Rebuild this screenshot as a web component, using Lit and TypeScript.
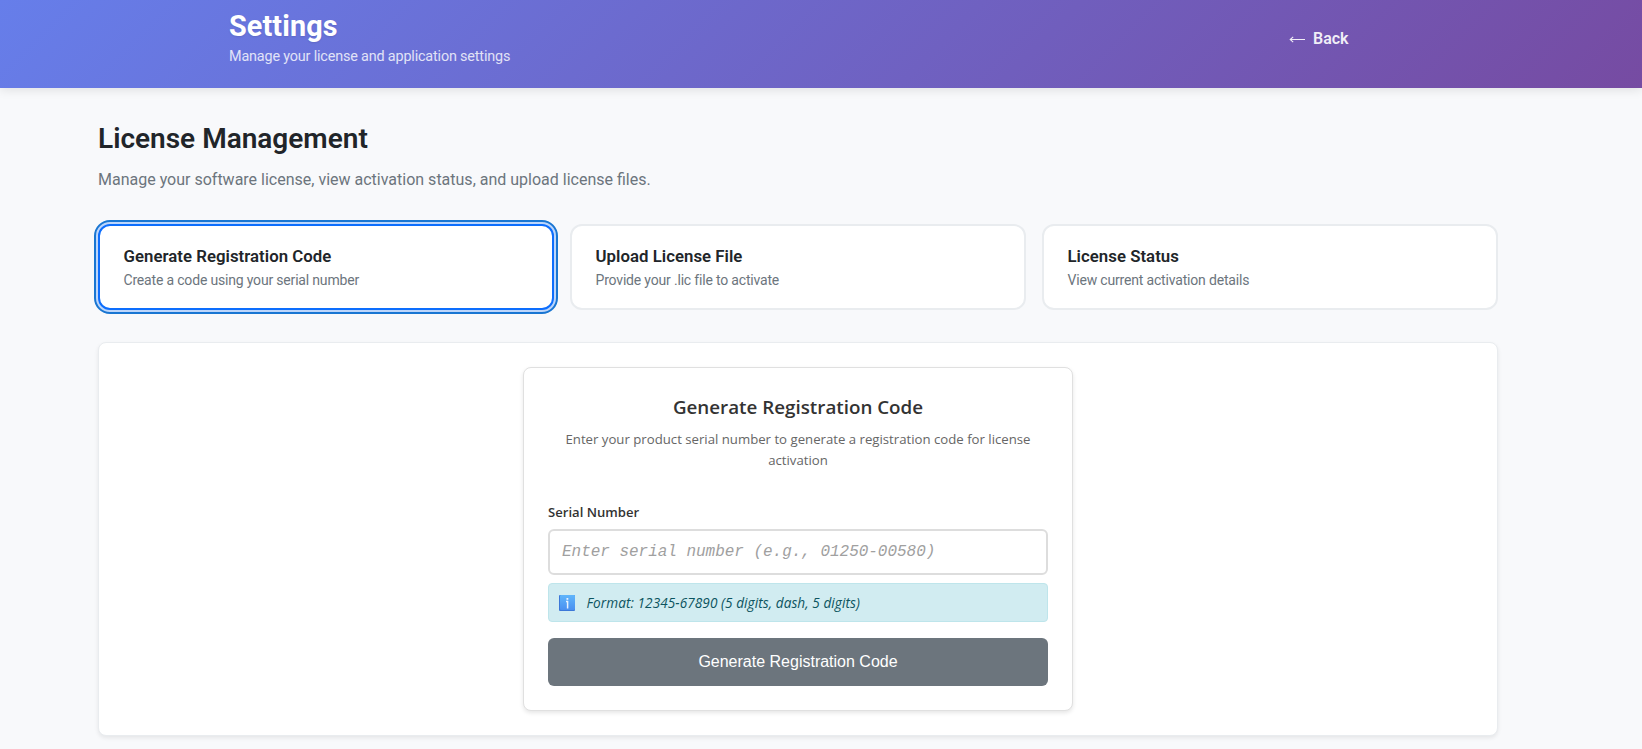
import { LitElement, html, css } from "lit";
import { customElement, property, state } from "lit/decorators.js";
import { classMap } from "lit/directives/class-map.js";

@customElement("settings-header")
class SettingsHeader extends LitElement {
  static styles = css`
    :host { display: block; }
    .bar {
      height: 88px; box-sizing: border-box; padding: 9px 0 0 229px;
      display: flex; color: #fff;
      background: linear-gradient(135deg, #667eea 0%, #764ba2 100%);
      box-shadow: 0 2px 10px rgba(0, 0, 0, 0.1);
    }
    .titles { width: 1060px; }
    h1 { margin: 0; font-size: 28.8px; line-height: 35px; font-weight: 700; letter-spacing: 0.1px; text-shadow: 0 1px 2px rgba(0, 0, 0, 0.1); }
    p { margin: 2px 0 0; font-size: 14.4px; line-height: 21px; letter-spacing: -0.17px; opacity: 0.8; }
    .back { display: flex; align-items: center; gap: 8px; height: 24px; margin-top: 17px; font-size: 16px; font-weight: 600; opacity: 0.9; }
    .arrow { display: block; width: 16px; height: 7px; margin-top: 2px; }
  `;
  render() {
    return html`<header class="bar">
      <div class="titles">
        <h1>Settings</h1>
        <p>Manage your license and application settings</p>
      </div>
      <a class="back">
        <svg class="arrow" viewBox="0 0 16 7" fill="none" stroke="#fff" stroke-width="1.1"><path d="M1 3.5H16M4.2 0.8L1.2 3.5L4.2 6.2" /></svg>
        <span>Back</span>
      </a>
    </header>`;
  }
}

@customElement("option-card")
class OptionCard extends LitElement {
  @property() heading = "";
  @property() detail = "";
  @property({ type: Boolean }) active = false;
  static styles = css`
    :host { display: block; }
    .card {
      display: block; width: 100%; height: 86px; box-sizing: border-box; text-align: left;
      padding: 18px 23.5px; background: #fff; border: 2px solid #e9ecef; border-radius: 12px;
      font-family: Roboto, sans-serif;
    }
    .active { border-color: #0d6efd; box-shadow: 0 0 0 3px rgba(13, 110, 253, 0.25); outline: 2px solid #1976d2; outline-offset: 2px; }
    .heading { display: block; font-size: 16.8px; line-height: 24px; font-weight: 600; letter-spacing: 0.03px; color: #212529; }
    .detail { display: block; margin-top: 2px; font-size: 14px; line-height: 21px; letter-spacing: -0.18px; color: #6c757d; }
  `;
  render() {
    return html`<button class=${classMap({ card: true, active: this.active })}>
      <span class="heading">${this.heading}</span>
      <span class="detail">${this.detail}</span>
    </button>`;
  }
}

@customElement("registration-form")
class RegistrationForm extends LitElement {
  static styles = css`
    :host { display: block; width: 550px; }
    .form {
      height: 344px; box-sizing: border-box; padding: 24px; background: #fff;
      border: 1px solid #e0e0e0; border-radius: 8px; box-shadow: 0 2px 4px rgba(0, 0, 0, 0.1);
      font-family: "Open Sans", "Noto Sans", sans-serif;
    }
    h3 { margin: 0; text-align: center; font-size: 18.8px; line-height: 30px; font-weight: 600; color: #333; }
    p { margin: 7px 0 0; text-align: center; font-size: 13.2px; line-height: 21px; color: #666; }
    label { display: block; margin-top: 31px; font-size: 13.1px; line-height: 20px; font-weight: 600; color: #333; }
    input {
      display: block; width: 100%; height: 46px; box-sizing: border-box; margin-top: 7px; padding: 0 12px;
      border: 2px solid #ddd; border-radius: 6px; background: #fff;
      font: 16px "Liberation Mono", monospace; letter-spacing: -0.03px;
    }
    input::placeholder { color: #a0a0a0; font-style: italic; opacity: 1; }
    .hint {
      display: flex; align-items: center; gap: 11.5px; height: 39px; box-sizing: border-box; margin-top: 8px; padding: 0 10px;
      background: #d1ecf1; border: 1px solid #bee5eb; border-radius: 4px;
      color: #0c5460; font-size: 13.6px; font-style: italic; letter-spacing: 0.07px;
    }
    .info { display: block; width: 16px; height: 16px; margin-top: 1px; }
    .submit {
      display: block; width: 100%; height: 48px; margin-top: 16px; border: 0; border-radius: 6px;
      background: #6c757d; color: #fff; font: 16px "Liberation Sans", Arial, sans-serif;
    }
  `;
  render() {
    return html`<section class="form">
      <h3><span>Generate Registration Code</span></h3>
      <p>Enter your product serial number to generate a registration code for license<br />activation</p>
      <label for="serial"><span>Serial Number</span></label>
      <input id="serial" placeholder="Enter serial number (e.g., 01250-00580)" />
      <div class="hint">
        <svg class="info" viewBox="0 0 16 16">
          <defs><linearGradient id="g" x2="0" y2="1"><stop stop-color="#5fb5fb" /><stop offset="1" stop-color="#4a90f0" /></linearGradient></defs>
          <rect width="16" height="16" rx="1" fill="#3c78d8" />
          <rect x="1" width="15" height="15" rx="1" fill="url(#g)" />
          <path d="M7 6.5H8.6V13.5" fill="none" stroke="#e9f3ff" stroke-width="1.5" />
          <rect x="7.5" y="3" width="1.8" height="1.8" fill="#e9f3ff" />
        </svg>
        <span>Format: 12345-67890 (5 digits, dash, 5 digits)</span>
      </div>
      <button class="submit">Generate Registration Code</button>
    </section>`;
  }
}

@customElement("app-root")
class AppRoot extends LitElement {
  @state() private selected = 0;
  private options = [
    ["Generate Registration Code", "Create a code using your serial number"],
    ["Upload License File", "Provide your .lic file to activate"],
    ["License Status", "View current activation details"],
  ];
  static styles = css`
    :host { display: block; height: 749px; overflow: hidden; background: #f8f9fb; font-family: Roboto, sans-serif; }
    main { width: 1400px; margin-left: 98px; padding-top: 33px; }
    h2 { margin: 0; font-size: 28px; line-height: 36px; font-weight: 600; color: #212529; }
    .lead { margin: 11px 0 0; font-size: 16px; line-height: 24px; color: #6c757d; }
    .options { display: grid; grid-template-columns: repeat(3, 1fr); gap: 16px; margin-top: 32px; }
    .panel {
      display: flex; justify-content: center; height: 394px; box-sizing: border-box; margin-top: 32px; padding-top: 24px;
      background: #fff; border: 1px solid #e9ecef; border-radius: 8px; box-shadow: 0 2px 4px rgba(0, 0, 0, 0.08);
    }
  `;
  render() {
    return html`<settings-header></settings-header>
      <main>
        <h2>License Management</h2>
        <p class="lead">Manage your software license, view activation status, and upload license files.</p>
        <div class="options">
          ${this.options.map(
            ([heading, detail], i) => html`<option-card .heading=${heading} .detail=${detail} ?active=${i === this.selected} @click=${() => (this.selected = i)}></option-card>`
          )}
        </div>
        <div class="panel"><registration-form></registration-form></div>
      </main>`;
  }
}
